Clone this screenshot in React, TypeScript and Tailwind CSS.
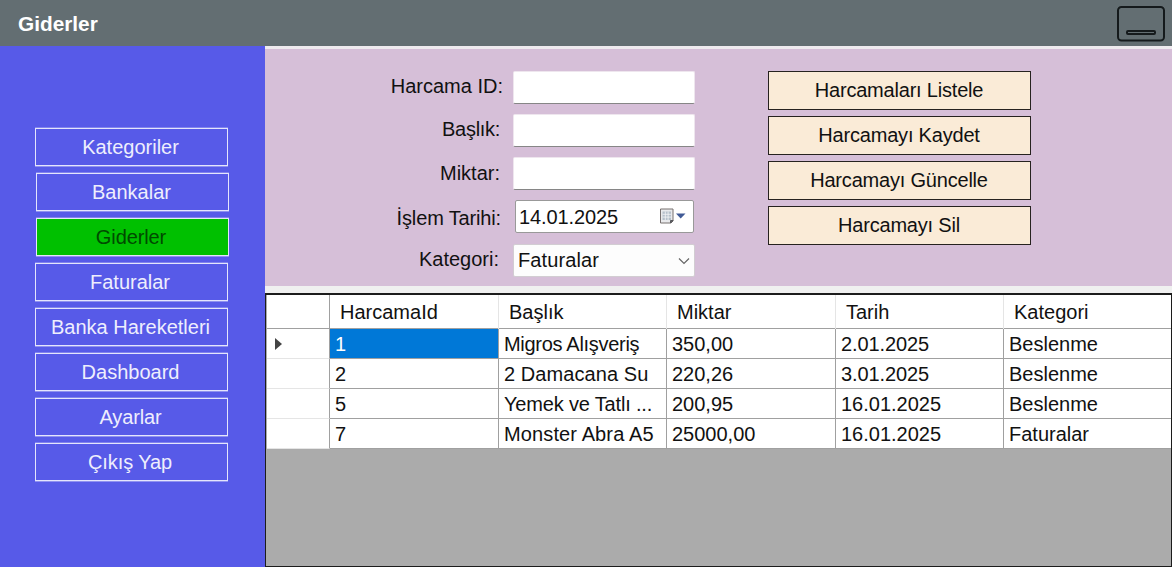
import React from "react";

const menu = [
  { label: "Kategoriler", box: "ml-[35px]", text: "pr-[2px]" },
  { label: "Bankalar", box: "ml-9", text: "pr-[2px]" },
  { label: "Giderler", box: "ml-9", text: "pr-[3px] tracking-[-0.1px]", active: true },
  { label: "Faturalar", box: "ml-[35px]", text: "pr-[3px]" },
  { label: "Banka Hareketleri", box: "ml-[35px]", text: "pr-[2px]" },
  { label: "Dashboard", box: "ml-[35px]", text: "pr-[2px]" },
  { label: "Ayarlar", box: "ml-[35px]", text: "pr-[2px] tracking-[-0.15px]" },
  { label: "Çıkış Yap", box: "ml-[35px]", text: "pr-[3px] tracking-[-0.1px]" },
];

const actions = ["Harcamaları Listele", "Harcamayı Kaydet", "Harcamayı Güncelle", "Harcamayı Sil"];

const columns = ["HarcamaId", "Başlık", "Miktar", "Tarih", "Kategori"];

type Cell = { text: string; style?: string };

const rows: Cell[][] = [
  [
    { text: "1" },
    { text: "Migros Alışveriş", style: "tracking-[-0.3px]" },
    { text: "350,00" },
    { text: "2.01.2025", style: "tracking-[-0.1px]" },
    { text: "Beslenme" },
  ],
  [
    { text: "2" },
    { text: "2 Damacana Su", style: "tracking-[0.08px]" },
    { text: "220,26" },
    { text: "3.01.2025", style: "tracking-[-0.1px]" },
    { text: "Beslenme" },
  ],
  [
    { text: "5" },
    { text: "Yemek ve Tatlı ...", style: "tracking-[-0.17px]" },
    { text: "200,95" },
    { text: "16.01.2025" },
    { text: "Beslenme" },
  ],
  [
    { text: "7" },
    { text: "Monster Abra A5", style: "tracking-[0.12px]" },
    { text: "25000,00" },
    { text: "16.01.2025" },
    { text: "Faturalar" },
  ],
];

const gridCols = "grid grid-cols-[63px_169px_168px_169px_168px_168px]";

function Header() {
  return (
    <header className="flex h-[46px] shrink-0 items-start justify-between bg-[#636e72]">
      <h1 className="pl-[18px] pt-[9px] text-[20.8px] leading-[30px] font-bold text-white">Giderler</h1>
      <button aria-label="Simge durumuna küçült" className="mr-[6px] mt-[5px]">
        <svg className="block" width="50" height="38" viewBox="0 0 50 38" fill="none" stroke="#151a1c">
          <rect x="2" y="2" width="46" height="33.5" rx="3.5" strokeWidth="2" />
          <rect x="11" y="26" width="28" height="3" rx="1" strokeWidth="2" />
        </svg>
      </button>
    </header>
  );
}

function Sidebar() {
  return (
    <nav className="flex w-[265px] shrink-0 flex-col gap-[7px] bg-[#575ae8] pt-[82px]">
      {menu.map((m) => (
        <button
          key={m.label}
          className={
            "h-[38px] w-[193px] shrink-0 border border-[#e4e5fc] leading-[34px] whitespace-nowrap shadow-[0_1px_0_#8f91f0,0_-1px_0_#8183ee] " +
            m.box +
            " " +
            m.text +
            (m.active ? " bg-[#00c000] text-[#004a00]" : " text-[#eeeefd]")
          }
        >
          {m.label}
        </button>
      ))}
    </nav>
  );
}

function TextBox() {
  return (
    <input className="h-[33px] w-[182px] rounded-[2px] border border-[#eee6ee] border-b-[#868686] bg-white px-1 outline-none" />
  );
}

function CalendarIcon() {
  return (
    <svg className="-mt-[2px]" width="28" height="18" viewBox="0 0 28 18">
      <path d="M1.5 2h12.5v12l-2 2h-10.500z" fill="#e9eaec" stroke="#77706f" />
      <path d="M3.5 4.500h8.500v8.500h-8.500z" fill="#b6c0ca" />
      <path d="M3.500 7.300h8.500M3.500 10.100h8.500M6.300 4.500v8.500M9.100 4.500v8.500" stroke="#f5f6f8" strokeWidth=".8" />
      <path d="M11.500 16v-2.500h2.500z" fill="#55565a" stroke="#55565a" />
      <path d="M17 6.500h9.500l-4.800 5z" fill="#405a96" />
    </svg>
  );
}

function Field({ label, pad, row, children }: { label: string; pad: string; row: string; children: React.ReactNode }) {
  return (
    <div className={"flex items-start " + row}>
      <label className={"w-[248px] shrink-0 whitespace-nowrap text-right leading-[30px] " + pad}>{label}</label>
      {children}
    </div>
  );
}

function ExpenseForm() {
  return (
    <section className="flex h-[240px] shrink-0 border-t-[3px] border-t-[#eeeaee] bg-[#d6bfd8]">
      <div className="w-[503px] pt-[22px]">
        <Field label="Harcama ID:" pad="pr-[10px]" row="h-[43px]">
          <TextBox />
        </Field>
        <Field label="Başlık:" pad="pr-[13px] tracking-[-0.3px]" row="h-[43px]">
          <TextBox />
        </Field>
        <Field label="Miktar:" pad="pr-[13px] pt-px" row="h-[43px]">
          <TextBox />
        </Field>
        <Field label="İşlem Tarihi:" pad="pr-[12px] pt-[3px] tracking-[-0.15px]" row="h-[44px]">
          <div className="ml-[2px] flex h-[33px] w-[179px] items-center justify-between rounded-[2px] border border-[#999] bg-white pr-[6px] pl-[3px]">
            <span className="leading-7 tracking-[-0.1px]">14.01.2025</span>
            <CalendarIcon />
          </div>
        </Field>
        <Field label="Kategori:" pad="pr-[14px]" row="h-[36px]">
          <div className="flex h-[33px] w-[182px] items-center justify-between rounded-[2px] border border-[#d2cdd2] bg-[#fdfdfd] pr-[4px] pl-[4px]">
            <span className="leading-[31px] tracking-[0.1px]">Faturalar</span>
            <svg width="12" height="8" viewBox="0 0 12 8" fill="none" stroke="#666" strokeWidth="1.2">
              <path d="M1 1.500l5 5 5-5" />
            </svg>
          </div>
        </Field>
      </div>
      <div className="flex w-[263px] flex-col gap-[6px] pt-[22px]">
        {actions.map((a) => (
          <button
            key={a}
            className="h-[39px] border border-[#26221f] bg-[#faebd7] pr-px leading-[35px] tracking-[-0.2px] text-[#111]"
          >
            {a}
          </button>
        ))}
      </div>
    </section>
  );
}

function ExpenseGrid() {
  return (
    <section className="min-h-0 flex-1 overflow-hidden border border-t-2 border-[#1c1c1c] bg-[#ababab] pl-px">
      <div className={gridCols + " h-[34px] border-b border-[#a0a0a0] bg-white leading-[35px]"}>
        <div className="border-r border-[#a0a0a0]" />
        {columns.map((c) => (
          <div key={c} className="border-r border-[#e5e5e5] pl-[10px]">
            {c}
          </div>
        ))}
      </div>
      {rows.map((r, i) => (
        <div key={r[0].text} className={gridCols + " h-[30px] bg-white leading-[31px]"}>
          <div className="flex items-center border-r border-b border-r-[#a0a0a0] border-b-[#e5e5e5] pl-[8px]">
            {i === 0 && (
              <svg width="7" height="12" viewBox="0 0 7 12">
                <path d="M0 0l7 6-7 6z" fill="#444" />
              </svg>
            )}
          </div>
          {r.map((cell, j) => (
            <div
              key={j}
              className={
                "overflow-hidden border-r border-b border-[#a0a0a0] pl-[5px] whitespace-nowrap " +
                (i === 0 && j === 0 ? "bg-[#0078d7] text-white " : "") +
                (cell.style ?? "")
              }
            >
              {cell.text}
            </div>
          ))}
        </div>
      ))}
    </section>
  );
}

export default function App() {
  return (
    <div className="flex h-[567px] w-[1172px] flex-col overflow-hidden bg-[#f0f0f0] font-['Liberation_Sans',Arial,sans-serif] text-[20px] text-[#111]">
      <Header />
      <div className="flex min-h-0 flex-1">
        <Sidebar />
        <main className="flex min-w-0 flex-1 flex-col gap-[7px]">
          <ExpenseForm />
          <ExpenseGrid />
        </main>
      </div>
    </div>
  );
}
